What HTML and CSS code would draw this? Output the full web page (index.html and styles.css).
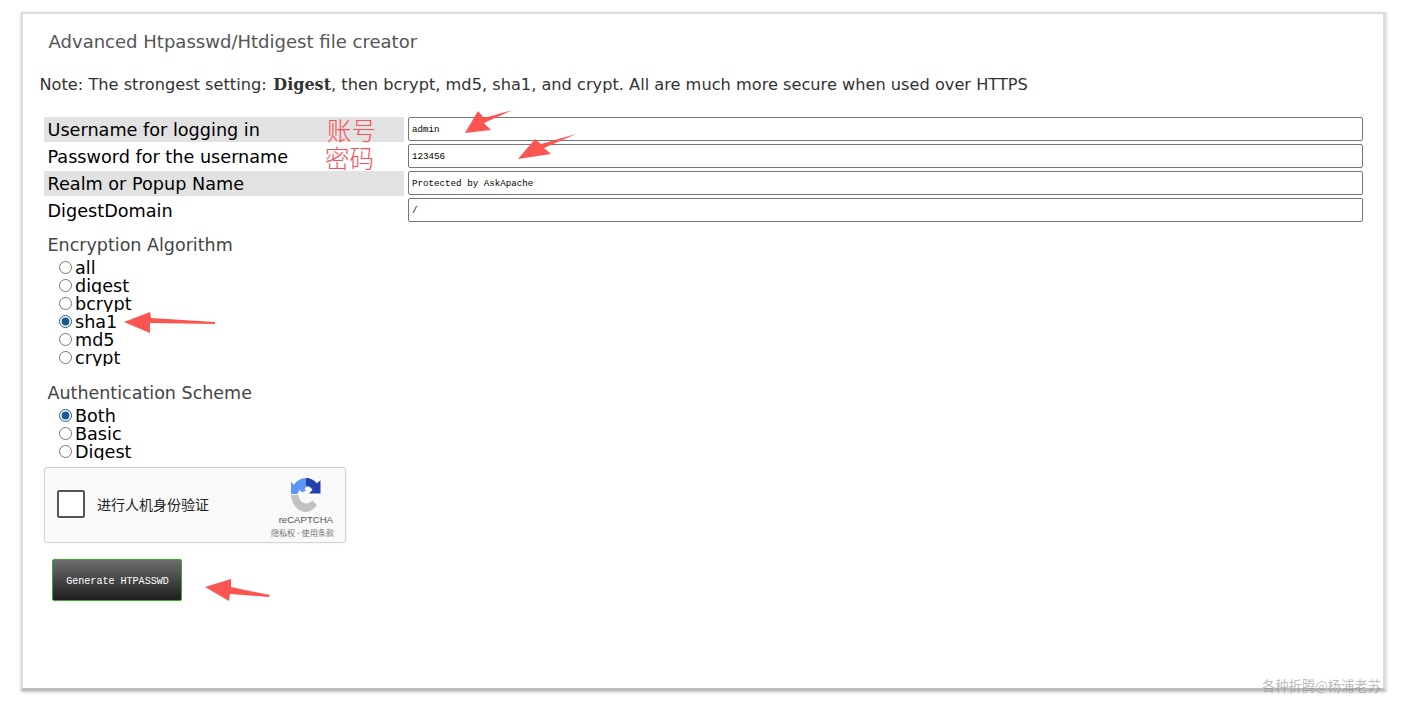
FILE: index.html
```html
<!DOCTYPE html>
<html lang="en">
<head>
<meta charset="utf-8">
<title>Advanced Htpasswd/Htdigest file creator</title>
<link rel="stylesheet" href="styles.css">
</head>
<body>
<main class="card">
  <h1 class="title">Advanced Htpasswd/Htdigest file creator</h1>
  <p class="note">Note: The strongest setting: <strong class="note-strong">Digest</strong>, then bcrypt, md5, sha1, and crypt. All are much more secure when used over HTTPS</p>
  <form class="form">
    <div class="rows">
      <div class="row"><label class="label shaded">Username for logging in</label><input class="field" type="text" value="admin"></div>
      <div class="row"><label class="label">Password for the username</label><input class="field" type="text" value="123456"></div>
      <div class="row"><label class="label shaded">Realm or Popup Name</label><input class="field" type="text" value="Protected by AskApache"></div>
      <div class="row"><label class="label">DigestDomain</label><input class="field" type="text" value="/"></div>
    </div>
    <fieldset class="group algo">
      <legend class="legend">Encryption Algorithm</legend>
      <label class="opt"><input type="radio" name="algo">all</label>
      <label class="opt"><input type="radio" name="algo">digest</label>
      <label class="opt"><input type="radio" name="algo">bcrypt</label>
      <label class="opt"><input type="radio" name="algo" checked>sha1</label>
      <label class="opt"><input type="radio" name="algo">md5</label>
      <label class="opt"><input type="radio" name="algo">crypt</label>
    </fieldset>
    <fieldset class="group scheme">
      <legend class="legend">Authentication Scheme</legend>
      <label class="opt"><input type="radio" name="scheme" checked>Both</label>
      <label class="opt"><input type="radio" name="scheme">Basic</label>
      <label class="opt"><input type="radio" name="scheme">Digest</label>
    </fieldset>
    <div class="captcha">
      <span class="check"></span>
      <span class="captcha-text">进行人机身份验证</span>
      <div class="brand">
        <svg class="brand-logo" viewBox="0 0 32 32" width="32" height="34" preserveAspectRatio="none" aria-hidden="true">
          <path fill="#5a96f6" d="M16 0C11 0 6.500 2.600 4 6.500L1 3.500V15h6.500c.5-1.500 1.200-2.800 2.200-3.800l2.300 2.300 4-1.500-1.500-2 3.500-3V0z"/>
          <path fill="#2440ab" d="M16 0c4.300 0 8.200 1.900 10.900 5L30.500 2v12.500H19l3.500-3.500C21 9 19 7.500 16 7.500z"/>
          <path fill="#c2c2c2" d="M1 16h7.500c.5 4.500 3.500 8 7.500 8 2.600 0 4.900-1 6.500-2.800l4.300 4.300C24 29.300 20.200 32 16 32 7.700 32 1.300 24.300 1 16z"/>
        </svg>
        <span class="brand-name">reCAPTCHA</span>
        <span class="brand-links">隐私权 - 使用条款</span>
      </div>
    </div>
    <button class="submit" type="button">Generate HTPASSWD</button>
  </form>
</main>

<span class="note-cn">账号<br>密码</span>
<span class="watermark">各种折腾@杨浦老苏</span>

<svg class="arrows" width="1402" height="713" viewBox="0 0 1402 713" aria-hidden="true">
  <path d="M513 110 L484 123 L491 130 L465 133 L478 111 L484 118 Z"/>
  <path d="M576 134 L544 148 L551 154 L518 159 L535 139 L541 144 Z"/>
  <path d="M215 322 L215 324 L150 323 L150 333 L124 322 L150 312 L151 318 Z"/>
  <path d="M270 595 L269 597 L230 594 L229 601 L205 587 L231 579 L231 587 Z"/>
</svg>
</body>
</html>
```
FILE: styles.css
```css
* { box-sizing: border-box; }
html, body { margin: 0; padding: 0; }
body {
  width: 1402px;
  height: 713px;
  overflow: hidden;
  background: #fff;
  font-family: "DejaVu Sans", Verdana, sans-serif;
  color: #000;
  padding: 12px 16px 0 21px;
}
.card {
  width: 1365px;
  height: 679px;
  background: #fff;
  border: 2px solid #dcdcdc;
  border-bottom: 3px solid #bdbdbd;
  border-right: 3px solid #dcdcdc;
  box-shadow: 0 1px 3px rgba(0,0,0,.25);
  padding: 0;
}
.title {
  margin: 18px 0 0 25.500px;
  font-size: 18.050px;
  line-height: 20px;
  font-weight: 400;
  color: #555;
  white-space: nowrap;
}
.note {
  margin: 23px 0 0 16.500px;
  font-size: 16.2px;
  line-height: 20px;
  color: #333;
  white-space: nowrap;
}
.note-strong {
  font-family: "DejaVu Serif", serif;
  font-size: 16px;
  margin-left: 1.500px;
}
.form { margin: 22px 0 0 21px; }
.rows { display: flex; flex-direction: column; gap: 2px; }
.row { display: flex; align-items: stretch; height: 25px; gap: 4px; }
.label {
  width: 360px;
  padding: 1px 0 0 3.500px;
  font-size: 17.650px;
  line-height: 25px;
  white-space: nowrap;
}
.shaded { background: #e2e2e2; }
.field {
  width: 955px;
  height: 24px;
  border: 1px solid #767676;
  border-radius: 2px;
  padding: 1px 3px 0;
  font-family: "Liberation Mono", monospace;
  font-size: 9.2px;
  color: #000;
  background: #fff;
}
.group { border: 0; margin: 0; padding: 0; display: flex; flex-direction: column; }
.algo { margin-top: 12px; }
.scheme { margin-top: 17px; }
.legend {
  padding: 0 0 0 3.500px;
  font-size: 17.5px;
  line-height: 20px;
  color: #444;
  height: 23px;
  white-space: nowrap;
}
.opt {
  display: flex;
  align-items: center;
  height: 18px;
  overflow: hidden;
  padding: 2px 0 0 15px;
  font-size: 17.6px;
  line-height: 18px;
}
.opt input { width: 13px; height: 13px; margin: 0 3px 2px 0; accent-color: #1c5a8c; flex: none; }
.captcha {
  margin-top: 7px;
  width: 302px;
  height: 76px;
  border: 1px solid #d3d3d3;
  border-radius: 3px;
  background: #f9f9f9;
  box-shadow: 0 0 3px rgba(0,0,0,.08);
  display: flex;
  align-items: center;
  padding: 0 12px 2px;
}
.check {
  width: 28px;
  height: 28px;
  border: 2px solid #555;
  border-radius: 2px;
  background: #fff;
  flex: none;
}
.captcha-text {
  margin-left: 12px;
  font-family: "Noto Sans CJK SC", sans-serif;
  font-size: 14px;
  color: #222;
}
.brand {
  margin-left: auto;
  display: flex;
  flex-direction: column;
  align-items: flex-end;
  align-self: flex-start;
  padding-top: 10px;
}
.brand-logo { display: block; margin-right: 11px; filter: blur(.4px); }
.brand-name {
  margin-top: 2px;
  font-family: "Liberation Sans", sans-serif;
  font-size: 9.6px;
  line-height: 12px;
  color: #555;
}
.brand-links {
  margin: 1px -1px 0 0;
  font-family: "Noto Sans CJK SC", sans-serif;
  font-size: 8.1px;
  line-height: 12px;
  color: #777;
  white-space: nowrap;
}
.submit {
  display: block;
  margin: 16px 0 0 8px;
  width: 130px;
  height: 42px;
  border: 1px solid #3aa82c;
  border-radius: 2px;
  background: linear-gradient(#6e6e6e, #1e1e1e);
  color: #fff;
  font-family: "Liberation Mono", monospace;
  font-size: 10.050px;
  padding: 2px 0 0 1px;
}
.note-cn {
  position: absolute;
  left: 325px;
  top: 116px;
  font-family: "Noto Sans CJK SC", sans-serif;
  font-size: 24.5px;
  font-weight: 300;
  line-height: 28px;
  text-indent: 2px;
  color: #f94f5a;
}
.watermark {
  position: absolute;
  left: 1262px;
  top: 678px;
  font-family: "Noto Sans CJK SC", sans-serif;
  font-size: 13.300px;
  line-height: 16px;
  color: rgba(120,120,120,.5);
  white-space: nowrap;
}
.arrows { position: absolute; left: 0; top: 0; pointer-events: none; }
.arrows path { fill: #fb5552; }
```
